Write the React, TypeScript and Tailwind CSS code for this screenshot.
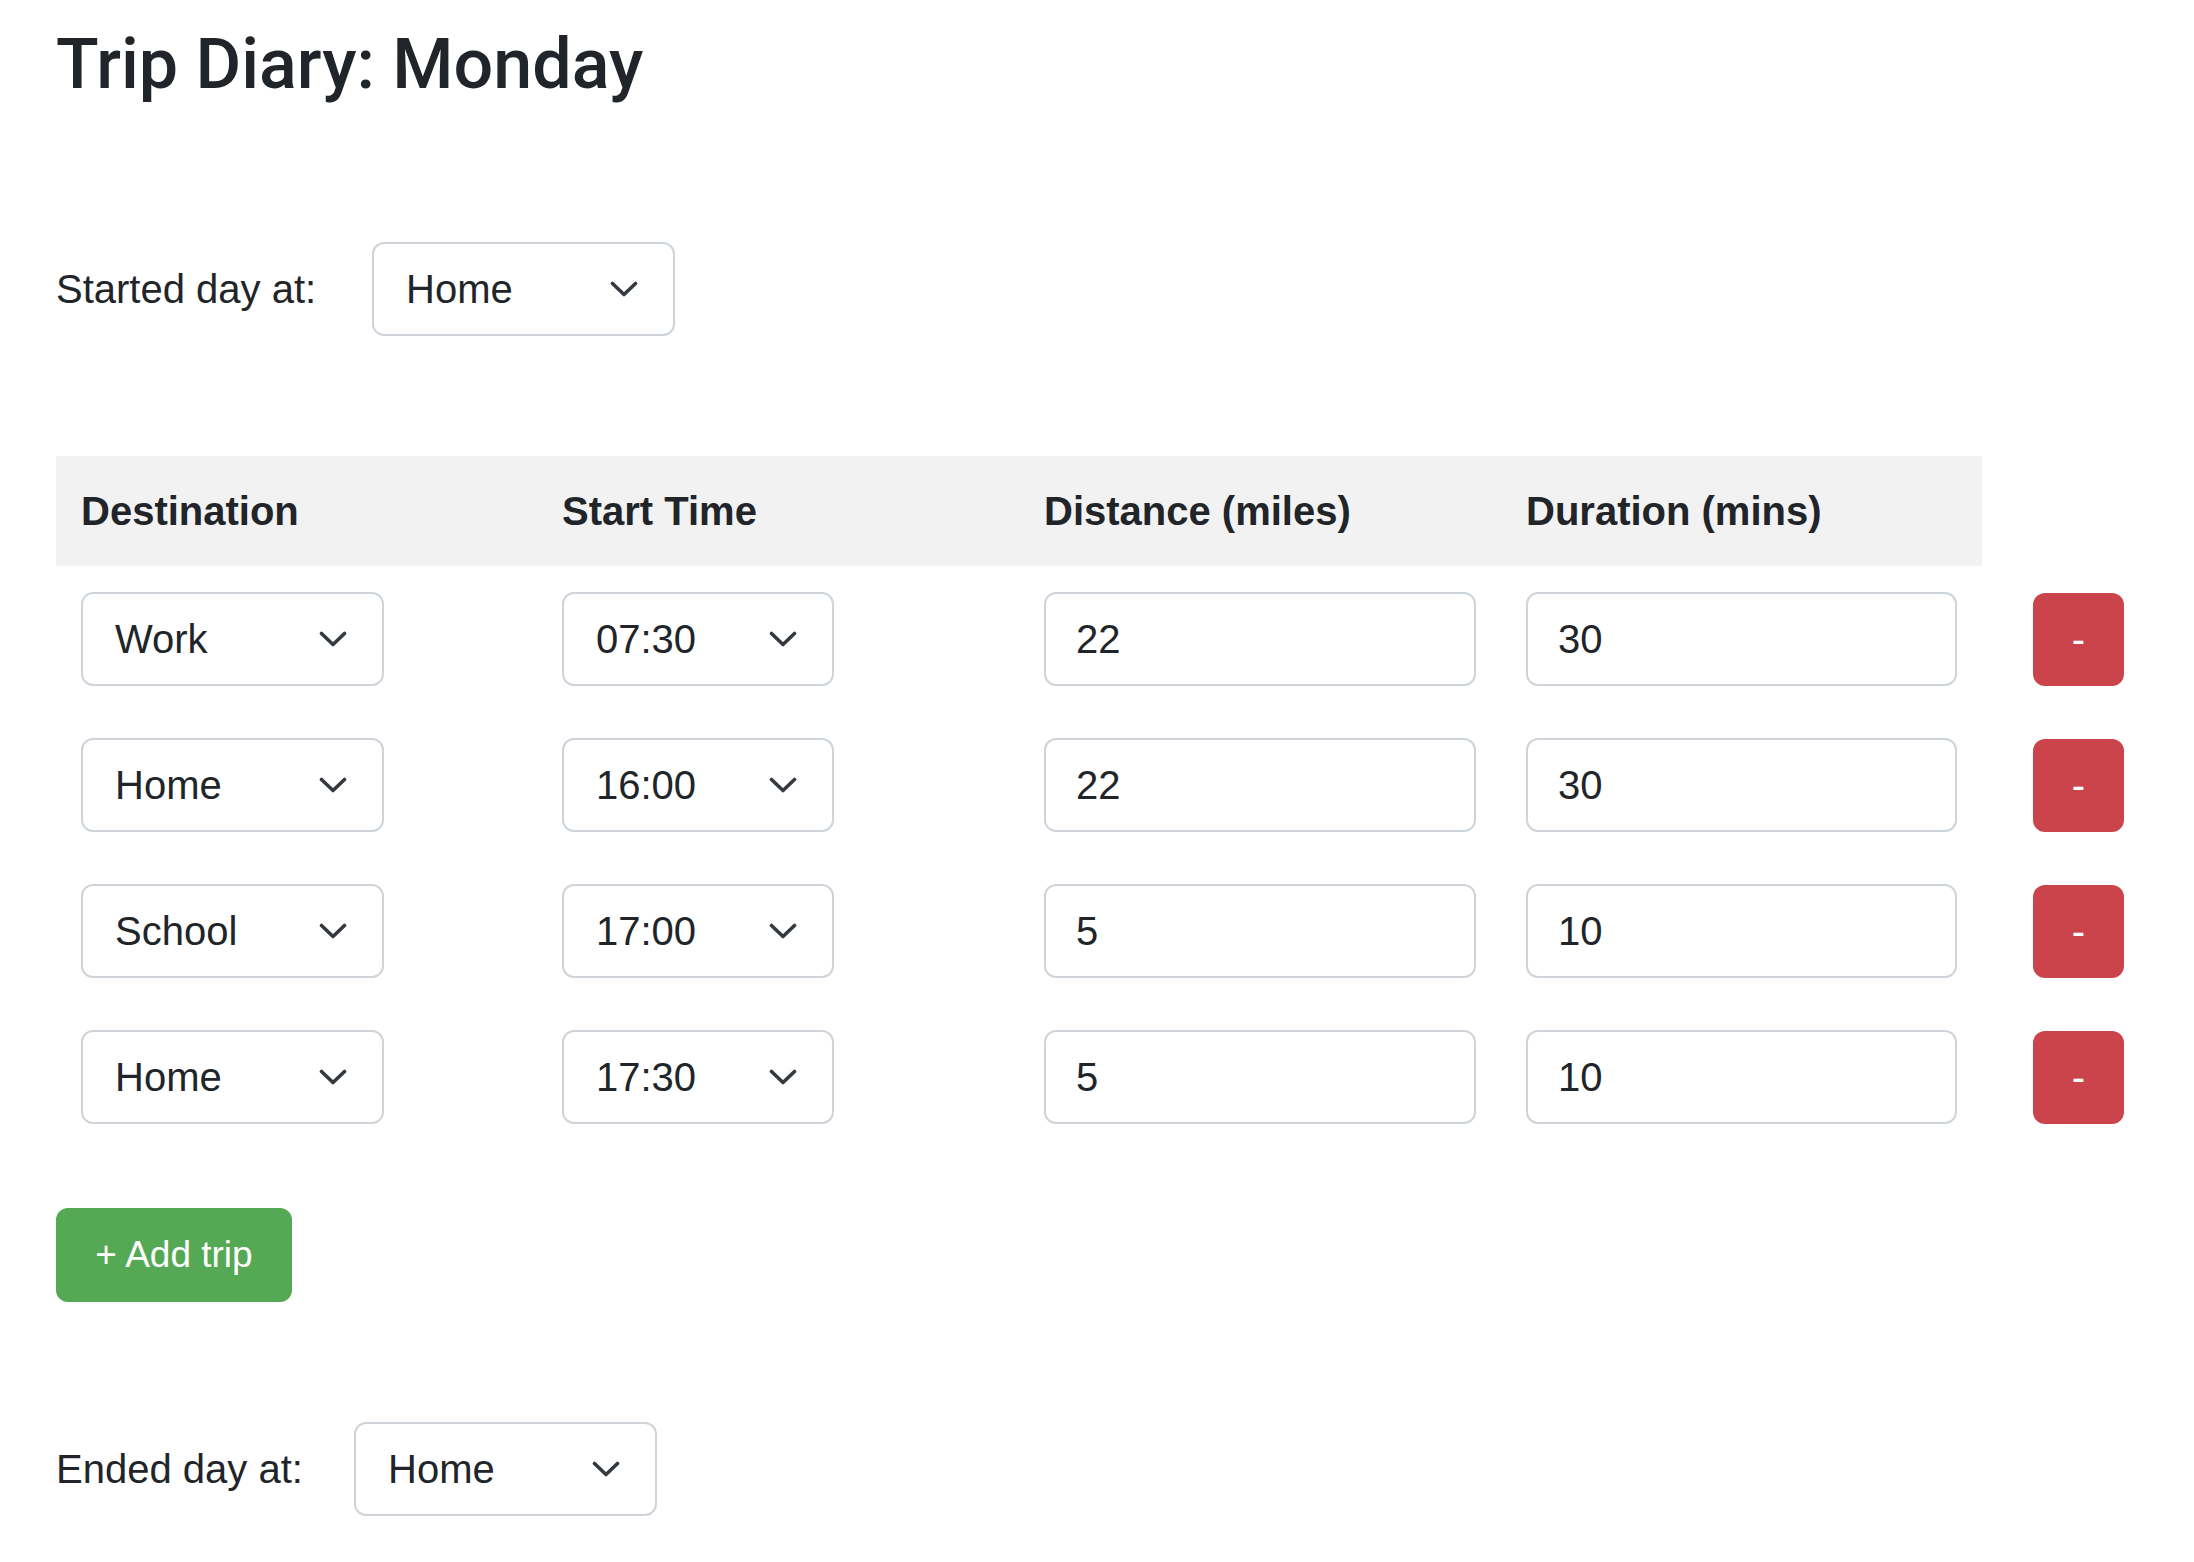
import { ReactNode } from "react";

const Chevron = () => (
  <svg width="28" height="16" viewBox="0 0 28 16" fill="none">
    <path d="M2.5 2.5l11.5 11L25.5 2.5" stroke="#343a40" strokeWidth="3.6" strokeLinecap="round" strokeLinejoin="round" />
  </svg>
);

const Select = ({ value, width }: { value: string; width: string }) => {
  return (
    <div
      className={`${width} h-[94px] flex items-center justify-between bg-white border-[2.5px] border-[#ced4da] rounded-[12px] pl-[32px] pr-[35px]`}
    >
      <span>{value}</span>
      <Chevron />
    </div>
  );
};

const TextBox = ({ value }: { value: string }) => {
  return (
    <div className="w-full h-[94px] flex items-center bg-white border-[2.5px] border-[#ced4da] rounded-[12px] pl-[30px]">
      {value}
    </div>
  );
};

const HeadCell = ({ children }: { children: ReactNode }) => (
  <div className="bg-[#f2f2f2] px-[25px] py-[25px] font-bold leading-[60px]">{children}</div>
);

const trips = [
  { dest: "Work", time: "07:30", dist: "22", dur: "30" },
  { dest: "Home", time: "16:00", dist: "22", dur: "30" },
  { dest: "School", time: "17:00", dist: "5", dur: "10" },
  { dest: "Home", time: "17:30", dist: "5", dur: "10" },
];

export default function App() {
  return (
    <div className="min-h-screen bg-white text-[#212529] font-['Liberation_Sans',Arial,sans-serif] text-[40px] leading-[1.5] pl-[56px] pt-[22px]">
      <h1 className="font-['Roboto',sans-serif] font-medium text-[70px] leading-[84px]">Trip Diary: Monday</h1>

      <div className="mt-[136px] flex items-center">
        <span className="w-[316px]">Started day at:</span>
        <Select value="Home" width="w-[303px]" />
      </div>

      <div className="mt-[120px] grid grid-cols-[481px_482px_482px_481px_auto] items-center">
        <HeadCell>Destination</HeadCell>
        <HeadCell>Start Time</HeadCell>
        <HeadCell>Distance (miles)</HeadCell>
        <HeadCell>Duration (mins)</HeadCell>
        <div />
        {trips.map((t, i) => (
          <div key={i} className="contents">
            <div className="px-[25px] py-[26px]">
              <Select value={t.dest} width="w-[303px]" />
            </div>
            <div className="px-[25px] py-[26px]">
              <Select value={t.time} width="w-[272px]" />
            </div>
            <div className="px-[25px] py-[26px]">
              <TextBox value={t.dist} />
            </div>
            <div className="px-[25px] py-[26px]">
              <TextBox value={t.dur} />
            </div>
            <div className="pl-[51px] py-[26px]">
              <button className="w-[91px] h-[93px] bg-[#cc444b] rounded-[12px] text-white flex items-center justify-center">
                -
              </button>
            </div>
          </div>
        ))}
      </div>

      <button className="mt-[58px] w-[236px] h-[94px] bg-[#55a854] rounded-[12px] text-white text-[37px] flex items-center justify-center">
        + Add trip
      </button>

      <div className="mt-[120px] flex items-center pb-[46px]">
        <span className="w-[298px]">Ended day at:</span>
        <Select value="Home" width="w-[303px]" />
      </div>
    </div>
  );
}
